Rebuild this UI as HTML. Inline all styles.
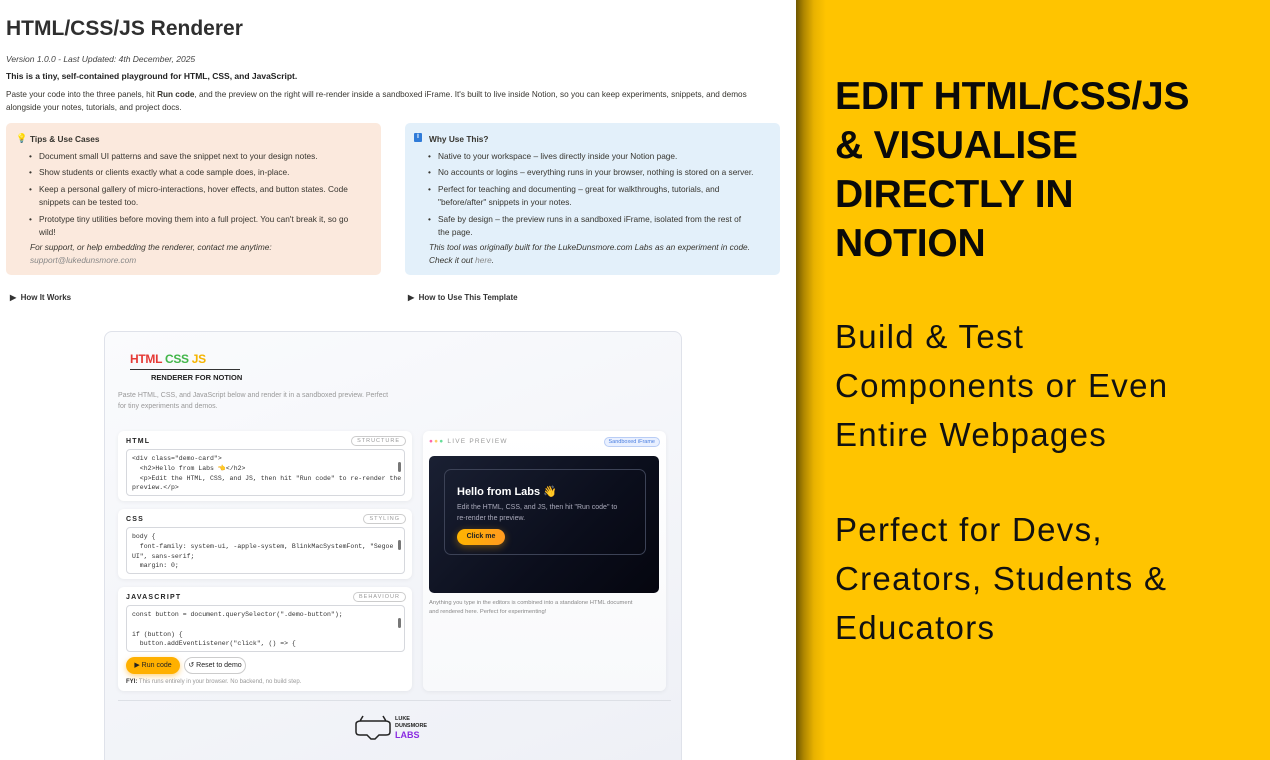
<!DOCTYPE html>
<html style="overflow:hidden"><head><meta charset="utf-8">
<style>
*{margin:0;padding:0;box-sizing:border-box}
html,body{width:1270px;height:760px;overflow:hidden}
body{background:#fff;font-family:"Liberation Sans",sans-serif;color:#37352f;position:relative}
.a{position:absolute;white-space:nowrap}
.right{position:absolute;left:796px;top:0;width:474px;height:760px;background:linear-gradient(90deg,#6e5600 0px,#b08700 8px,#e8b200 18px,#ffc400 30px,#ffc400)}
.h{position:absolute;left:835px;font-weight:900;font-size:39px;line-height:49px;color:#0a0a0a;letter-spacing:-0.2px}
.sub{position:absolute;left:835px;font-size:33px;line-height:49px;color:#111;letter-spacing:1.3px}
.box{position:absolute;top:123px;height:152px;width:375px;border-radius:5px;font-size:8.3px;color:#37352f}
.box li{position:absolute;left:33px;list-style:none;line-height:13px;white-space:normal;width:315px}
.box li:before{content:"•";position:absolute;left:-10px}
.card{position:absolute;left:104px;top:331px;width:578px;height:440px;border:1px solid #dfe2ea;border-radius:8px;background:linear-gradient(160deg,#fafbfd,#eef0f6)}
.pan{position:absolute;background:#fff;border-radius:6px;box-shadow:0 1px 4px rgba(0,0,0,.06)}
.lab{position:absolute;left:8px;top:7px;font-size:7px;font-weight:bold;letter-spacing:1.2px;color:#222}
.tag{position:absolute;right:6px;top:5px;font-size:5.5px;letter-spacing:1px;color:#999;border:1px solid #ccc;border-radius:8px;padding:1px 5px}
.ed{position:absolute;left:8px;right:7px;border:1px solid #d6d8dd;border-radius:4px;font-family:"Liberation Mono",monospace;font-size:6.5px;line-height:9.8px;color:#333;padding:4px 14px 0 5px;overflow:hidden;white-space:pre}
.sb{position:absolute;right:3px;top:12px;width:3px;height:10px;background:#777;border-radius:2px}
</style></head><body>
<div class="a" style="left:6px;top:17px;font-size:21px;font-weight:bold;color:#2f2f2f">HTML/CSS/JS Renderer</div>
<div class="a" style="left:6px;top:54px;font-size:8.5px;font-style:italic;color:#444">Version 1.0.0 - Last Updated: 4th December, 2025</div>
<div class="a" style="left:6px;top:71px;font-size:8.5px;font-weight:bold;color:#222">This is a tiny, self-contained playground for HTML, CSS, and JavaScript.</div>
<div class="a" style="left:6px;top:88px;font-size:8.2px;line-height:13px;color:#37352f">Paste your code into the three panels, hit <b>Run code</b>, and the preview on the right will re-render inside a sandboxed iFrame. It's built to live inside Notion, so you can keep experiments, snippets, and demos<br>alongside your notes, tutorials, and project docs.</div>

<div class="box" style="left:6px;background:#fbe9dd">
<div class="a" style="left:10px;top:10px;color:#f0c020;font-size:9px">💡</div>
<div class="a" style="left:24px;top:11px;font-weight:bold">Tips &amp; Use Cases</div>
<ul>
<li style="top:27px">Document small UI patterns and save the snippet next to your design notes.</li>
<li style="top:43px">Show students or clients exactly what a code sample does, in-place.</li>
<li style="top:60px">Keep a personal gallery of micro-interactions, hover effects, and button states. Code snippets can be tested too.</li>
<li style="top:90px">Prototype tiny utilities before moving them into a full project. You can't break it, so go wild!</li>
</ul>
<div class="a" style="left:24px;top:118px;font-style:italic;line-height:13px">For support, or help embedding the renderer, contact me anytime:<br><span style="color:#888">support@lukedunsmore.com</span></div>
</div>
<div class="box" style="left:405px;background:#e3f0fa">
<div class="a" style="left:9px;top:10px;width:8px;height:9px;background:#2f7bd8;border-radius:1px;color:#fff;font-size:7px;text-align:center;font-weight:bold">i</div>
<div class="a" style="left:24px;top:11px;font-weight:bold">Why Use This?</div>
<ul>
<li style="top:27px">Native to your workspace – lives directly inside your Notion page.</li>
<li style="top:43px;width:340px">No accounts or logins – everything runs in your browser, nothing is stored on a server.</li>
<li style="top:60px">Perfect for teaching and documenting – great for walkthroughs, tutorials, and "before/after" snippets in your notes.</li>
<li style="top:90px">Safe by design – the preview runs in a sandboxed iFrame, isolated from the rest of the page.</li>
</ul>
<div class="a" style="left:24px;top:118px;font-style:italic;line-height:13px">This tool was originally built for the LukeDunsmore.com Labs as an experiment in code.<br>Check it out <span style="color:#888">here</span>.</div>
</div>
<div class="a" style="left:10px;top:293px;font-size:8px;font-weight:bold;color:#333">▶&nbsp; How It Works</div>
<div class="a" style="left:408px;top:293px;font-size:8px;font-weight:bold;color:#333">▶&nbsp; How to Use This Template</div>

<div class="card">
<div class="a" style="left:25px;top:20px;font-size:12px;font-weight:bold;letter-spacing:-0.3px"><span style="color:#e53935">HTML</span> <span style="color:#43b64a">CSS</span> <span style="color:#f5b400">JS</span></div>
<div class="a" style="left:25px;top:37px;width:110px;height:1px;background:#333"></div>
<div class="a" style="left:46px;top:41px;font-size:7.5px;font-weight:bold;color:#222">RENDERER FOR NOTION</div>
<div class="a" style="left:13px;top:58px;font-size:7px;line-height:11px;color:#999">Paste HTML, CSS, and JavaScript below and render it in a sandboxed preview. Perfect<br>for tiny experiments and demos.</div>

<div class="pan" style="left:13px;top:99px;width:294px;height:70px">
<div class="lab">HTML</div><div class="tag">STRUCTURE</div>
<div class="ed" style="top:18px;height:47px">&lt;div class="demo-card"&gt;
  &lt;h2&gt;Hello from Labs <span style="color:#f5a000">👈</span>&lt;/h2&gt;
  &lt;p&gt;Edit the HTML, CSS, and JS, then hit "Run code" to re-render the
preview.&lt;/p&gt;<div class="sb"></div></div>
</div>
<div class="pan" style="left:13px;top:177px;width:294px;height:70px">
<div class="lab">CSS</div><div class="tag">STYLING</div>
<div class="ed" style="top:18px;height:47px">body {
  font-family: system-ui, -apple-system, BlinkMacSystemFont, "Segoe
UI", sans-serif;
  margin: 0;<div class="sb"></div></div>
</div>
<div class="pan" style="left:13px;top:255px;width:294px;height:104px">
<div class="lab">JAVASCRIPT</div><div class="tag">BEHAVIOUR</div>
<div class="ed" style="top:18px;height:47px">const button = document.querySelector(".demo-button");

if (button) {
  button.addEventListener("click", () =&gt; {<div class="sb"></div></div>
<div class="a" style="left:8px;top:70px;width:54px;height:17px;border-radius:9px;background:#ffb000;box-shadow:0 2px 6px rgba(255,170,0,.5);font-size:7px;color:#222;line-height:17px;text-align:center">▶ Run code</div>
<div class="a" style="left:66px;top:70px;width:62px;height:17px;border-radius:9px;border:1px solid #ccc;background:#fff;font-size:7px;color:#222;line-height:15px;text-align:center">↺ Reset to demo</div>
<div class="a" style="left:8px;top:92px;font-size:6px;color:#999"><b style="color:#333">FYI:</b> This runs entirely in your browser. No backend, no build step.</div>
</div>
<div class="pan" style="left:318px;top:99px;width:243px;height:260px;background:linear-gradient(#fff,#f8f9fb)">
<div class="a" style="left:6px;top:7px;font-size:6.5px;letter-spacing:1.2px;color:#999"><span style="color:#f6a">●</span><span style="color:#fc6">●</span><span style="color:#6d9">●</span> LIVE PREVIEW</div>
<div class="a" style="right:6px;top:6px;font-size:5.5px;color:#4a7ee0;background:#e9f0ff;border:1px solid #b9cdf5;border-radius:7px;padding:1px 4px">Sandboxed iFrame</div>
<div class="a" style="left:6px;top:25px;width:230px;height:137px;border-radius:5px;background:linear-gradient(135deg,#1a2033,#0b0e1c 60%,#05060f)">
<div class="a" style="left:15px;top:13px;width:202px;height:86px;border:1px solid #3c4256;border-radius:7px">
<div class="a" style="left:12px;top:15px;font-size:11px;font-weight:bold;color:#fff">Hello from Labs <span style="color:#f5b000">👋</span></div>
<div class="a" style="left:12px;top:32px;font-size:7px;line-height:11px;color:#aab">Edit the HTML, CSS, and JS, then hit "Run code" to<br>re-render the preview.</div>
<div class="a" style="left:12px;top:59px;width:48px;height:16px;border-radius:8px;background:linear-gradient(90deg,#ffb400,#ff9a20);font-size:7px;font-weight:bold;color:#222;line-height:16px;text-align:center;box-shadow:0 2px 8px rgba(255,170,0,.4)">Click me</div>
</div></div>
<div class="a" style="left:6px;top:168px;font-size:5.8px;line-height:8.5px;color:#888">Anything you type in the editors is combined into a standalone HTML document<br>and rendered here. Perfect for experimenting!</div>
</div>
<div class="a" style="left:13px;top:368px;width:553px;height:1px;background:#dde0e6"></div>
<svg class="a" style="left:248px;top:380px" width="40" height="30" viewBox="0 0 40 30"><path d="M3 12 Q3 9 8 9 L32 9 Q37 9 37 12 L37 20 Q37 23 33 23 L26 23 L22 27 L18 27 L14 23 L7 23 Q3 23 3 20 Z M7 9 L10 4 M33 9 L30 4" fill="none" stroke="#222" stroke-width="1.5"/></svg>
<div class="a" style="left:290px;top:384px;font-size:5.5px;font-weight:bold;line-height:7px;color:#222">LUKE<br>DUNSMORE</div>
<div class="a" style="left:290px;top:398px;font-size:9px;font-weight:bold;color:#8a2be2">LABS</div>
</div>

<div class="right"></div>
<div class="h" style="top:72px">EDIT HTML/CSS/JS</div>
<div class="h" style="top:121px">&amp; VISUALISE</div>
<div class="h" style="top:170px">DIRECTLY IN</div>
<div class="h" style="top:219px">NOTION</div>
<div class="sub" style="top:312px">Build &amp; Test<br>Components or Even<br>Entire Webpages</div>
<div class="sub" style="top:505px">Perfect for Devs,<br>Creators, Students &amp;<br>Educators</div>
</body></html>
